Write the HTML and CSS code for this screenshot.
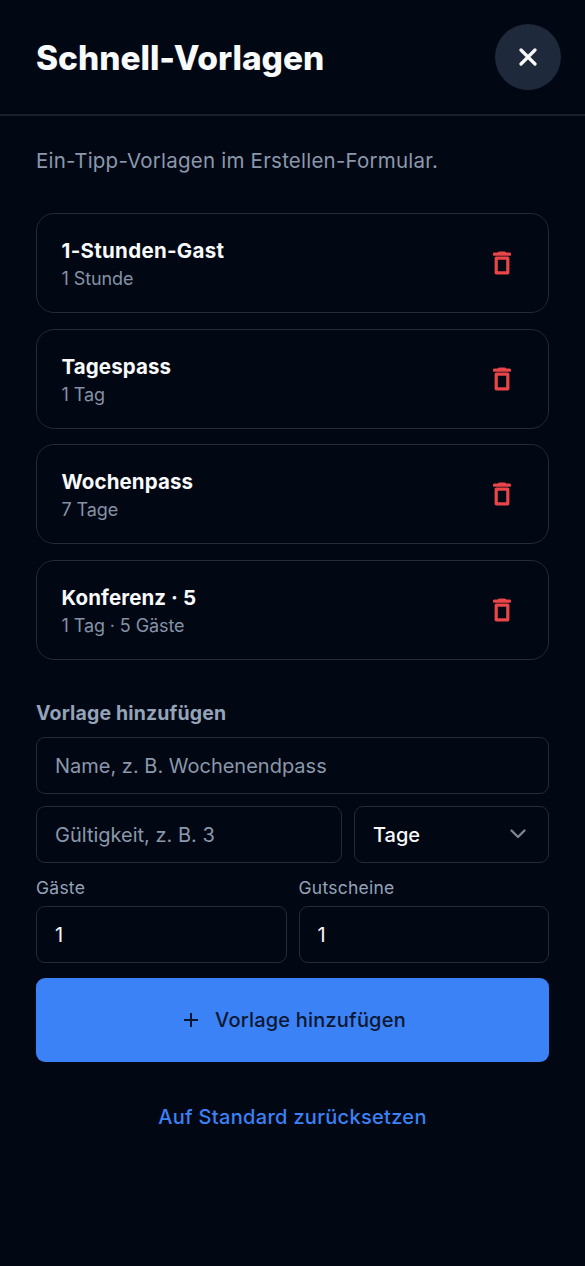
FILE: index.html
```html
<!DOCTYPE html>
<html lang="de">
<head>
<meta charset="utf-8">
<title>Schnell-Vorlagen</title>
<link rel="stylesheet" href="styles.css">
</head>
<body>
<header class="header">
  <h1 class="title">Schnell-Vorlagen</h1>
  <button class="close" aria-label="Schließen"><svg width="18" height="18" viewBox="0 0 18 18"><path d="M2 2l14 14M16 2L2 16"/></svg></button>
</header>
<main class="main">
  <p class="intro">Ein-Tipp-Vorlagen im Erstellen-Formular.</p>
  <ul class="list">
    <li class="card"><div><div class="name name-hour">1-Stunden-Gast</div><div class="meta">1 Stunde</div></div><svg class="trash" viewBox="0 0 18 24"><path d="M3.200 7.100h11.600v14.700H3.200zM1.500 3.200h15M6.300 2h5.400"/></svg></li>
    <li class="card"><div><div class="name">Tagespass</div><div class="meta">1 Tag</div></div><svg class="trash" viewBox="0 0 18 24"><path d="M3.200 7.100h11.600v14.700H3.200zM1.500 3.200h15M6.300 2h5.400"/></svg></li>
    <li class="card"><div><div class="name">Wochenpass</div><div class="meta">7 Tage</div></div><svg class="trash" viewBox="0 0 18 24"><path d="M3.200 7.100h11.600v14.700H3.200zM1.500 3.200h15M6.300 2h5.400"/></svg></li>
    <li class="card"><div><div class="name">Konferenz · 5</div><div class="meta">1 Tag · 5 Gäste</div></div><svg class="trash" viewBox="0 0 18 24"><path d="M3.200 7.100h11.600v14.700H3.200zM1.500 3.200h15M6.300 2h5.400"/></svg></li>
  </ul>
  <h2 class="subtitle">Vorlage hinzufügen</h2>
  <form class="form">
    <input class="field" placeholder="Name, z. B. Wochenendpass" aria-label="Name">
    <div class="row">
      <input class="field field-duration" placeholder="Gültigkeit, z. B. 3" aria-label="Gültigkeit">
      <div class="field select"><span>Tage</span><svg width="18" height="12" viewBox="0 0 18 12"><path d="M2.500 2.500L9 9l6.500-6.500"/></svg></div>
    </div>
    <div class="row">
      <label class="group"><span class="label">Gäste</span><input class="field" value="1"></label>
      <label class="group"><span class="label">Gutscheine</span><input class="field" value="1"></label>
    </div>
    <button class="submit" type="button"><svg width="16" height="16" viewBox="0 0 16 16"><path d="M8 1v14M1 8h14"/></svg><span>Vorlage hinzufügen</span></button>
  </form>
  <button class="reset">Auf Standard zurücksetzen</button>
</main>
</body>
</html>
```

FILE: styles.css
```css
* { box-sizing: border-box; }
body {
  margin: 0;
  min-height: 1266px;
  background: #010713;
  color: #f8fafc;
  font-family: Inter, "Liberation Sans", sans-serif;
  font-size: 20px;
}
h1, h2, p, ul { margin: 0; padding: 0; }
button, input { font: inherit; letter-spacing: inherit; }
svg { display: block; flex: none; fill: none; stroke: currentColor; }
.header {
  display: flex;
  align-items: center;
  justify-content: space-between;
  height: 116px;
  padding: 0 24px 0 36px;
  border-bottom: 2px solid #17212d;
}
.title { padding-top: 2px; font-size: 33.5px; line-height: 44px; font-weight: 800; letter-spacing: -0.05px; }
.close {
  display: grid;
  place-items: center;
  width: 66px;
  height: 66px;
  padding: 0;
  border: 0;
  border-radius: 50%;
  background: #1e293b;
  color: #f8fafc;
}
.close svg { stroke-width: 3.2; stroke-linecap: round; }
.main { display: flex; flex-direction: column; padding: 29px 36px 0; }
.intro { height: 68px; color: #8b98ab; font-size: 20.5px; font-weight: 430; letter-spacing: 0.22px; line-height: 32px; }
.list { display: grid; gap: 15.5px; list-style: none; }
.card {
  display: flex;
  align-items: center;
  justify-content: space-between;
  height: 100px;
  padding: 1px 37px 0 24.5px;
  border: 1.5px solid #222b37;
  border-radius: 18px;
}
.card:nth-child(even) { padding-top: 2px; }
.name { font-size: 20.5px; line-height: 29px; font-weight: 700; letter-spacing: 0.1px; }
.name-hour { letter-spacing: 0.3px; }
.meta { font-size: 18px; line-height: 27px; font-weight: 430; letter-spacing: -0.1px; color: #8592a6; }
.trash { width: 18px; height: 24px; margin-top: -1px; color: #ea4548; stroke-width: 3.2; stroke-linejoin: round; stroke-linecap: round; }
.subtitle { margin-top: 40px; font-size: 19.5px; line-height: 26px; font-weight: 650; letter-spacing: 0.15px; color: #94a3b8; }
.form { display: flex; flex-direction: column; margin-top: 11px; }
.row { display: flex; gap: 12px; margin-top: 12px; }
.group { flex: 1; min-width: 0; }
.label { display: block; height: 31px; font-size: 17.5px; line-height: 25px; font-weight: 430; letter-spacing: 0.25px; color: #94a3b8; }
.field {
  display: block;
  width: 100%;
  height: 57px;
  padding: 1px 18px 0;
  border: 1.5px solid #222b37;
  border-radius: 9px;
  background: transparent;
  color: #f8fafc;
  font-weight: 430;
  outline: 0;
}
.field::placeholder { color: #8b98ab; opacity: 1; }
.field-duration { width: 306px; }
.select { display: flex; align-items: center; justify-content: space-between; flex: 1; padding-right: 21px; font-weight: 450; }
.select svg { margin-top: -2px; stroke: #7c8593; stroke-width: 2.4; stroke-linecap: round; stroke-linejoin: round; }
.submit {
  display: flex;
  align-items: center;
  justify-content: center;
  gap: 16px;
  height: 84px;
  margin-top: 15px;
  padding: 1px 4px 0 8px;
  border: 0;
  border-radius: 9px;
  background: #3b82f6;
  color: #0b1730;
  font-weight: 500;
  letter-spacing: 0.2px;
}
.submit svg { stroke-width: 2; }
.reset { align-self: center; margin-top: 38px; padding: 0; border: 0; background: none; color: #3b82f6; line-height: 34px; font-weight: 500; letter-spacing: 0.31px; }
```
